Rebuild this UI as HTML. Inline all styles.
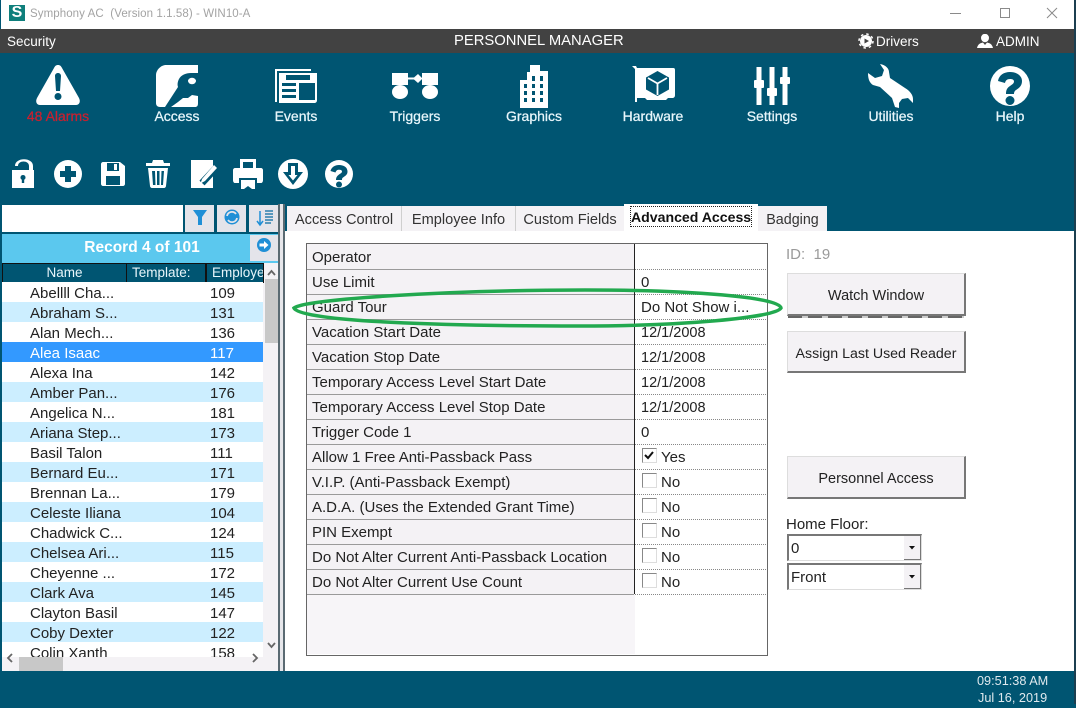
<!DOCTYPE html>
<html><head><meta charset="utf-8">
<style>
html,body{margin:0;padding:0}
body{width:1076px;height:704px;position:relative;overflow:hidden;background:#005572;font-family:"Liberation Sans",sans-serif;font-size:15px;color:#222}
div,span.t,svg{position:absolute}
.t{position:absolute;white-space:nowrap;line-height:20px}
.lbl{position:absolute;top:107px;width:118px;text-align:center;color:#e8f6fb;font-size:14px;line-height:18px;-webkit-text-stroke:.25px #e8f6fb}
.row{left:2px;width:261px;height:20px}
.tab{top:206px;height:25px;background:#f4f2f5;border-right:1px solid #cfcfcf;line-height:28px;text-align:center;font-size:14.6px;color:#333}
.l{left:307px;width:327px;height:24px;background:#f4f2f5;border-bottom:1px solid #9a9a9a}
.r{left:635px;width:131px;height:24px;border-bottom:1px dotted #888}
.btn{left:787px;width:176px;background:#f4f2f5;border-right:2px solid #777;border-bottom:2px solid #777;border-top:1px solid #ddd;border-left:1px solid #ddd;text-align:center;font-size:14.500px;color:#222}
.cb{left:642px;width:13px;height:13px;background:#fff;border:1px solid #888;border-right-color:#ddd;border-bottom-color:#ddd}
.hd{top:263px;height:18px;background:#005572;border:1px solid #fff;outline:1px solid #111;outline-offset:-1px;color:#e8f6fb;font-size:13.500px;line-height:18px;text-align:center;overflow:hidden;white-space:nowrap}
.tb{top:205px;height:27px;width:29px;background:#e4e4ea}
.cmb{left:787px;width:132px;height:24px;background:#fff;border-top:2px solid #777;border-left:2px solid #777;border-right:1px solid #ddd;border-bottom:1px solid #ddd;line-height:25px;text-indent:2px}
.ar{left:904px;width:16px;height:23px;background:#f4f2f5;border-right:1px solid #777;border-bottom:1px solid #777}
</style></head><body>

<!-- title bar -->
<div style="left:1px;top:0;width:1073px;height:29px;background:#fff"></div>
<div style="left:9px;top:5px;width:16px;height:16px;background:#0f7f7c;color:#fff;font-weight:700;font-size:16px;line-height:16px;text-align:center">S</div>
<span class="t" style="left:30px;top:4px;color:#a3a3a3;font-size:11.500px;line-height:20px;letter-spacing:.08px">Symphony AC&nbsp; (Version 1.1.58) - WIN10-A</span>
<svg style="left:950px;top:5px" width="120" height="18" fill="none" stroke="#8a8a8a" stroke-width="1"><path d="M0 8.500H11"/><rect x="50.500" y="3.500" width="9" height="9"/><path d="M97 3L107 13M107 3L97 13"/></svg>

<!-- dark bar -->
<div style="left:0;top:29px;width:1076px;height:24px;background:#424242"></div>
<span class="t" style="left:7px;top:32px;color:#fff;font-size:13.500px">Security</span>
<span class="t" style="left:454px;top:31px;color:#fff;font-size:14.800px">PERSONNEL MANAGER</span>
<svg style="left:858px;top:33px" width="16" height="16" viewBox="0 0 16 16"><circle cx="8" cy="8" r="6" fill="#fff"/><circle cx="8" cy="8" r="7" fill="none" stroke="#fff" stroke-width="1.500" stroke-dasharray="2.500 3"/><path d="M6.500 5.500L11 8L6.500 10.500Z" fill="#424242"/></svg>
<span class="t" style="left:876px;top:32px;color:#fff;font-size:13.500px">Drivers</span>
<svg style="left:977px;top:34px" width="16" height="14" viewBox="0 0 16 14" fill="#fff"><ellipse cx="8" cy="4" rx="4" ry="4.200"/><path d="M0 14C1 9.500 4 9 6 8.500L8 11L10 8.500C12 9 15 9.500 16 14Z"/></svg>
<span class="t" style="left:996px;top:32px;color:#fff;font-size:13.500px">ADMIN</span>

<!-- main icons -->
<svg style="left:0;top:55px" width="1076" height="60" viewBox="0 55 1076 60" fill="#fff">
 <!-- alarm -->
 <path fill-rule="evenodd" d="M58 65C60 65 61 66 62 68L79 98C81 102 79 105 76 105H40C37 105 35 102 37 98L54 68C55 66 56 65 58 65ZM55 76L56 91H60L61 76C61 72 55 72 55 76ZM58 93A3.500 3.500 0 1 0 58 100A3.500 3.500 0 1 0 58 93Z"/>
 <!-- access -->
 <path d="M166 65H198V103C198 106 197 107 195 107H160C157 107 156 105 156 103V75C156 70 161 65 166 65Z"/>
 <path d="M179 79C181 75 186 73 191 73H198V96L192 95L188 98L183 98L178 102L171 107H165L178 87C177 84 178 81 179 79Z" fill="#005572"/>
 <ellipse cx="192" cy="81" rx="4" ry="3.200"/>
 <!-- events -->
 <path d="M275 69H311V71H277V102H275Z"/>
 <path fill-rule="evenodd" d="M279 73H317V100C317 102 316 103 314 103H279ZM286 75V80H310V75ZM282 83V86H296V83ZM299 83V100H315V83ZM282 89V92H296V89ZM282 95V98H296V95Z"/>
 <!-- triggers -->
 <rect x="392" y="73" width="16" height="12"/><rect x="422" y="73" width="16" height="12"/>
 <path d="M408 77.500H414L418 74L422.500 78.500L418 83L414 79.500H408Z"/>
 <ellipse cx="400" cy="92" rx="8" ry="7"/><ellipse cx="430" cy="92" rx="8" ry="7"/>
 <!-- graphics -->
 <path fill-rule="evenodd" d="M530 65H540V71H548V108H520V80H527V72H530ZM524 84V88H527V84ZM524 91V95H527V91ZM524 98V102H527V98ZM532 76V81H535V76ZM532 84V88H535V84ZM532 91V95H535V91ZM532 98V102H535V98ZM540 76V81H543V76ZM540 84V88H543V84ZM540 91V95H543V91ZM540 98V102H543V98Z"/>
 <!-- hardware -->
 <path d="M632 66L636 66L637 68H673C674.500 68 675 68.500 675 70V95C675 97 674 98 672 98H668L666 100H647L645 98H637V102H635V69Z"/>
 <path d="M657.500 71L669 77.500V89.500L657.500 96L646 89.500V77.500Z" fill="#005572"/>
 <path d="M648 78L657.500 83.500L667 78M657.500 83.500V95" fill="none" stroke="#fff" stroke-width="1.800"/>
 <!-- settings -->
 <rect x="756.500" y="67" width="5" height="38"/><rect x="769.500" y="67" width="5" height="38"/><rect x="782.500" y="67" width="5" height="38"/>
 <rect x="754" y="80" width="10" height="8" rx="1"/><rect x="767" y="88" width="10" height="8" rx="1"/><rect x="780" y="77" width="10" height="7" rx="1"/>
 <!-- utilities -->
 <path d="M880 64C886 65 889 69 889 72L890 78L905 88C910 91 913 95 913 99V103L908 98L902 99L899 103V108L895 107L892 98L880 87L873 85C870 83 868 80 868 73L875 78L882 76L884 70Z"/>
 <!-- help -->
 <path fill-rule="evenodd" d="M1010 66A20 20 0 1 0 1010 106A20 20 0 1 0 1010 66ZM1010 72C1017 72 1022 76 1022 81C1022 86 1019 88 1016 90C1014 91.500 1014 93 1014 94H1006C1006 90 1007 88 1010 86C1013 84 1014 83 1014 81.500C1014 79.500 1012 79 1010 79C1007 79 1005.500 80.500 1005 83L998 81C999 75 1004 72 1010 72ZM1010 96A4.500 4.500 0 1 1 1010 105A4.500 4.500 0 1 1 1010 96Z"/>
</svg>
<div class="lbl" style="left:-1px;color:#c9202f;-webkit-text-stroke:.25px #c9202f">48 Alarms</div>
<div class="lbl" style="left:118px">Access</div>
<div class="lbl" style="left:237px">Events</div>
<div class="lbl" style="left:356px">Triggers</div>
<div class="lbl" style="left:475px">Graphics</div>
<div class="lbl" style="left:594px">Hardware</div>
<div class="lbl" style="left:713px">Settings</div>
<div class="lbl" style="left:832px">Utilities</div>
<div class="lbl" style="left:951px">Help</div>

<!-- toolbar -->
<svg style="left:0;top:155px" width="370" height="40" viewBox="0 155 370 40" fill="#fff">
 <path fill-rule="evenodd" d="M12 170H29V166C29 160 18 160 18 166H15C15 157 33 157 33 166V170H34V188H12ZM23 175A2.500 2.500 0 0 0 21.800 179.700V183H24.200V179.700A2.500 2.500 0 0 0 23 175Z"/>
 <path fill-rule="evenodd" d="M68 160A14 14 0 1 0 68 188A14 14 0 1 0 68 160ZM65 166H71V171H76V177H71V182H65V177H60V171H65Z"/>
 <path fill-rule="evenodd" d="M103 162H120L125 166V184C125 185 124 186 123 186H103C102 186 101 185 101 184V164C101 163 102 162 103 162ZM107 163V171H119V163ZM114 164H117V170H114ZM106 176V185H120V176Z"/>
 <path fill-rule="evenodd" d="M153 160H163L164 163H170V166H146V163H152ZM148 168H168L166 186C166 187 165 188 164 188H152C151 188 150 187 150 186ZM152 171L153 185H155.500L155 171ZM157 171V185H159.500V171ZM161.500 171L161 185H163L164 171Z"/>
 <path d="M191 160H213V188H191Z"/>
 <path d="M216 168L202 183" stroke="#005572" stroke-width="7" fill="none"/>
 <path d="M214 165L217 168L205 181L200.500 183.500L202 179Z"/>
 <path fill-rule="evenodd" d="M240 159H256V168H261C262 168 263 169 263 170V180C263 182 262 183 261 183H257V178H239V183H235C234 183 233 182 233 180V170C233 169 234 168 235 168H240ZM243 162V168H253V162Z"/>
 <path d="M241 180H255V189H252L248 186L244 189H241Z"/>
 <path fill-rule="evenodd" d="M293 159A15 15 0 1 0 293 189A15 15 0 1 0 293 159ZM288 163H298V172H303L293 185L283 172H288ZM291 166V175H288.500L293 180.500L297.500 175H295V166Z"/>
 <path fill-rule="evenodd" d="M339 160A14 14 0 1 0 339 188A14 14 0 1 0 339 160ZM339 165C344 165 347.500 167.500 347.500 171.500C347.500 175 345 176 343 177.500C342 178.200 342 179 342 180H336C336 177.500 337 176 339 174.500C341 173.200 342 172.700 342 171.500C342 170 340.500 169.700 339 169.700C337 169.700 336 170.700 335.500 172.500L330.500 171C331.500 167 335 165 339 165ZM339 181.500A3 3 0 1 1 339 187.500A3 3 0 1 1 339 181.500Z"/>
</svg>

<!-- left panel -->
<div style="left:2px;top:205px;width:181px;height:27px;background:#fff"></div>
<div class="tb" style="left:185px"></div><div class="tb" style="left:217px"></div><div class="tb" style="left:249px"></div>
<svg style="left:185px;top:205px" width="94" height="27" viewBox="0 0 94 27">
 <path d="M8 5H22L17 12V20H13V12Z" fill="#1f8fd6"/>
 <circle cx="47" cy="12" r="7.500" fill="#1f8fd6"/><path d="M42 11A5 5 0 0 1 51 9M52 13A5 5 0 0 1 43 15" fill="none" stroke="#e4e4ea" stroke-width="1.800"/>
 <path d="M75 6V19M72 16L75 20L78 16" fill="none" stroke="#1f8fd6" stroke-width="1.500"/>
 <path d="M80 6H88M80 9H88M80 12H88M80 15H88M80 18H86" stroke="#2a7fae" stroke-width="1.500"/>
</svg>
<div style="left:2px;top:234px;width:276px;height:437px;background:#f4f2f5"></div>
<div style="left:2px;top:234px;width:276px;height:29px;background:#5bc8ee"></div>
<span class="t" style="left:2px;top:238px;width:280px;text-align:center;color:#fff;font-weight:700;font-size:15.500px">Record 4 of 101</span>
<div style="left:250px;top:235px;width:28px;height:26px;background:#e4e4ea"></div>
<svg style="left:257px;top:238px" width="14" height="14" viewBox="0 0 14 14"><circle cx="7" cy="7" r="7" fill="#1f8fd6"/><path d="M2.500 5.500H7V3L11.500 7L7 11V8.500H2.500Z" fill="#fff"/></svg>
<div style="left:2px;top:263px;width:261px;height:19px;background:#fff"></div>
<div class="hd" style="left:2px;width:123px">Name</div>
<div class="hd" style="left:126px;width:78px;text-align:left;text-indent:5px">Template:</div>
<div class="hd" style="left:206px;width:56px;text-align:left;text-indent:5px">Employee</div>

<div style="left:2px;top:282px;width:261px;height:375px;overflow:hidden;background:#fff">
<div class="row" style="left:0;top:20px;background:#cceeff"></div>
<div class="row" style="left:0;top:60px;background:#3399ff"></div>
<div class="row" style="left:0;top:100px;background:#cceeff"></div>
<div class="row" style="left:0;top:140px;background:#cceeff"></div>
<div class="row" style="left:0;top:180px;background:#cceeff"></div>
<div class="row" style="left:0;top:220px;background:#cceeff"></div>
<div class="row" style="left:0;top:260px;background:#cceeff"></div>
<div class="row" style="left:0;top:300px;background:#cceeff"></div>
<div class="row" style="left:0;top:340px;background:#cceeff"></div>
<span class="t" style="left:28px;top:2px">Abellll Cha...</span><span class="t" style="left:208px;top:2px">109</span>
<span class="t" style="left:28px;top:22px">Abraham S...</span><span class="t" style="left:208px;top:22px">131</span>
<span class="t" style="left:28px;top:42px">Alan Mech...</span><span class="t" style="left:208px;top:42px">136</span>
<span class="t" style="left:28px;top:62px;color:#fff">Alea Isaac</span><span class="t" style="left:208px;top:62px;color:#fff">117</span>
<span class="t" style="left:28px;top:82px">Alexa Ina</span><span class="t" style="left:208px;top:82px">142</span>
<span class="t" style="left:28px;top:102px">Amber Pan...</span><span class="t" style="left:208px;top:102px">176</span>
<span class="t" style="left:28px;top:122px">Angelica N...</span><span class="t" style="left:208px;top:122px">181</span>
<span class="t" style="left:28px;top:142px">Ariana Step...</span><span class="t" style="left:208px;top:142px">173</span>
<span class="t" style="left:28px;top:162px">Basil Talon</span><span class="t" style="left:208px;top:162px">111</span>
<span class="t" style="left:28px;top:182px">Bernard Eu...</span><span class="t" style="left:208px;top:182px">171</span>
<span class="t" style="left:28px;top:202px">Brennan La...</span><span class="t" style="left:208px;top:202px">179</span>
<span class="t" style="left:28px;top:222px">Celeste Iliana</span><span class="t" style="left:208px;top:222px">104</span>
<span class="t" style="left:28px;top:242px">Chadwick C...</span><span class="t" style="left:208px;top:242px">124</span>
<span class="t" style="left:28px;top:262px">Chelsea Ari...</span><span class="t" style="left:208px;top:262px">115</span>
<span class="t" style="left:28px;top:282px">Cheyenne ...</span><span class="t" style="left:208px;top:282px">172</span>
<span class="t" style="left:28px;top:302px">Clark Ava</span><span class="t" style="left:208px;top:302px">145</span>
<span class="t" style="left:28px;top:322px">Clayton Basil</span><span class="t" style="left:208px;top:322px">147</span>
<span class="t" style="left:28px;top:342px">Coby Dexter</span><span class="t" style="left:208px;top:342px">122</span>
<span class="t" style="left:28px;top:362px">Colin Xanth</span><span class="t" style="left:208px;top:362px">158</span>
</div>
<div style="left:265px;top:279px;width:13px;height:64px;background:#c8c8c8"></div>
<div style="left:19px;top:657px;width:44px;height:14px;background:#c8c8c8"></div>
<svg style="left:0;top:265px" width="280" height="406" fill="none" stroke="#666" stroke-width="1.800">
 <path d="M268 10L271.500 6L275 10M268 378L271.500 382L275 378M12 389L8 393L12 397M253 389L257 393L253 397"/>
</svg>
<div style="left:278px;top:204px;width:2px;height:467px;background:#5a6a72"></div>
<div style="left:280px;top:204px;width:3px;height:467px;background:#e6e6ea"></div>
<div style="left:283px;top:204px;width:2px;height:467px;background:#5a6a72"></div>

<!-- right panel -->
<div style="left:285px;top:231px;width:789px;height:440px;background:#fff"></div>
<div class="tab" style="left:287px;width:114px">Access Control</div>
<div class="tab" style="left:402px;width:113px">Employee Info</div>
<div class="tab" style="left:516px;width:108px">Custom Fields</div>
<div style="left:624px;top:204px;width:134px;height:28px;background:#fff"></div>
<div style="left:630px;top:206px;width:122px;height:21px;border:1px dotted #222;box-sizing:border-box;text-align:center;font-weight:700;font-size:14.100px;line-height:21px;white-space:nowrap;color:#111">Advanced Access</div>
<div class="tab" style="left:758px;width:69px;border-right:0;font-size:14.300px">Badging</div>

<!-- table -->
<div style="left:306px;top:243px;width:460px;height:411px;border:1px solid #666;background:#fff"></div>
<div style="left:307px;top:594px;width:328px;height:60px;background:#f7f5f8"></div>
<div class="l" style="top:244px;height:25px"></div><div class="l" style="top:270px"></div><div class="l" style="top:295px"></div><div class="l" style="top:320px"></div><div class="l" style="top:345px"></div><div class="l" style="top:370px"></div><div class="l" style="top:395px"></div><div class="l" style="top:420px"></div><div class="l" style="top:445px"></div><div class="l" style="top:470px"></div><div class="l" style="top:495px"></div><div class="l" style="top:520px"></div><div class="l" style="top:545px"></div><div class="l" style="top:570px"></div>
<div class="r" style="top:244px;height:25px"></div><div class="r" style="top:270px"></div><div class="r" style="top:295px"></div><div class="r" style="top:320px"></div><div class="r" style="top:345px"></div><div class="r" style="top:370px"></div><div class="r" style="top:395px"></div><div class="r" style="top:420px"></div><div class="r" style="top:445px"></div><div class="r" style="top:470px"></div><div class="r" style="top:495px"></div><div class="r" style="top:520px"></div><div class="r" style="top:545px"></div><div class="r" style="top:570px"></div>
<div style="left:634px;top:244px;width:1px;height:350px;background:#222"></div>
<span class="t" style="left:312px;top:248px">Operator</span>
<span class="t" style="left:312px;top:273px">Use Limit</span>
<span class="t" style="left:312px;top:298px">Guard Tour</span>
<span class="t" style="left:312px;top:323px">Vacation Start Date</span>
<span class="t" style="left:312px;top:348px">Vacation Stop Date</span>
<span class="t" style="left:312px;top:373px">Temporary Access Level Start Date</span>
<span class="t" style="left:312px;top:398px">Temporary Access Level Stop Date</span>
<span class="t" style="left:312px;top:423px">Trigger Code 1</span>
<span class="t" style="left:312px;top:448px">Allow 1 Free Anti-Passback Pass</span>
<span class="t" style="left:312px;top:473px">V.I.P. (Anti-Passback Exempt)</span>
<span class="t" style="left:312px;top:498px">A.D.A. (Uses the Extended Grant Time)</span>
<span class="t" style="left:312px;top:523px">PIN Exempt</span>
<span class="t" style="left:312px;top:548px">Do Not Alter Current Anti-Passback Location</span>
<span class="t" style="left:312px;top:573px">Do Not Alter Current Use Count</span>
<span class="t" style="left:641px;top:273px">0</span>
<span class="t" style="left:641px;top:298px">Do Not Show i...</span>
<span class="t" style="left:641px;top:323px;font-size:14.500px">12/1/2008</span>
<span class="t" style="left:641px;top:348px;font-size:14.500px">12/1/2008</span>
<span class="t" style="left:641px;top:373px;font-size:14.500px">12/1/2008</span>
<span class="t" style="left:641px;top:398px;font-size:14.500px">12/1/2008</span>
<span class="t" style="left:641px;top:423px">0</span>
<div class="cb" style="top:448px"></div><div class="cb" style="top:473px"></div><div class="cb" style="top:498px"></div><div class="cb" style="top:523px"></div><div class="cb" style="top:548px"></div><div class="cb" style="top:573px"></div>
<svg style="left:643px;top:449px" width="12" height="12" fill="none" stroke="#111" stroke-width="2"><path d="M2 6L5 9L10 3"/></svg>
<span class="t" style="left:661px;top:448px">Yes</span>
<span class="t" style="left:661px;top:473px">No</span>
<span class="t" style="left:661px;top:498px">No</span>
<span class="t" style="left:661px;top:523px">No</span>
<span class="t" style="left:661px;top:548px">No</span>
<span class="t" style="left:661px;top:573px">No</span>

<!-- right controls -->
<span class="t" style="left:786px;top:245px;color:#9a9a9a">ID:&nbsp; 19</span>
<div style="left:788px;top:316px;width:176px;height:2px;background:repeating-linear-gradient(90deg,#666 0 14px,#ccc 14px 20px)"></div>
<div class="btn" style="top:273px;height:40px;line-height:44px">Watch Window</div>
<div class="btn" style="top:331px;height:39px;line-height:44px;font-size:14.200px">Assign Last Used Reader</div>
<div class="btn" style="top:456px;height:40px;line-height:44px">Personnel Access</div>
<span class="t" style="left:786px;top:515px">Home Floor:</span>
<div class="cmb" style="top:534px">0</div><div class="ar" style="top:536px"></div>
<div class="cmb" style="top:563px">Front</div><div class="ar" style="top:565px"></div>
<svg style="left:904px;top:536px" width="16" height="54" fill="#111"><path d="M5 10H11L8 13.500ZM5 39H11L8 42.500Z"/></svg>

<!-- green ellipse -->
<svg style="left:285px;top:280px" width="510" height="55" viewBox="285 280 510 55" fill="none"><path d="M294 308C305 299 450 290 585 290C690 290 780 297 781 308C775 318 680 326 580 326C450 326 300 322 294 308Z" stroke="#22a94f" stroke-width="3.500"/></svg>

<!-- right edge & status -->
<div style="left:1074px;top:0;width:2px;height:704px;background:#1c3f50"></div>
<span class="t" style="left:977px;top:671px;color:#dfe9ee;font-size:12.700px">09:51:38 AM</span>
<span class="t" style="left:978px;top:688px;color:#dfe9ee;font-size:12.700px">Jul 16, 2019</span>
</body></html>
